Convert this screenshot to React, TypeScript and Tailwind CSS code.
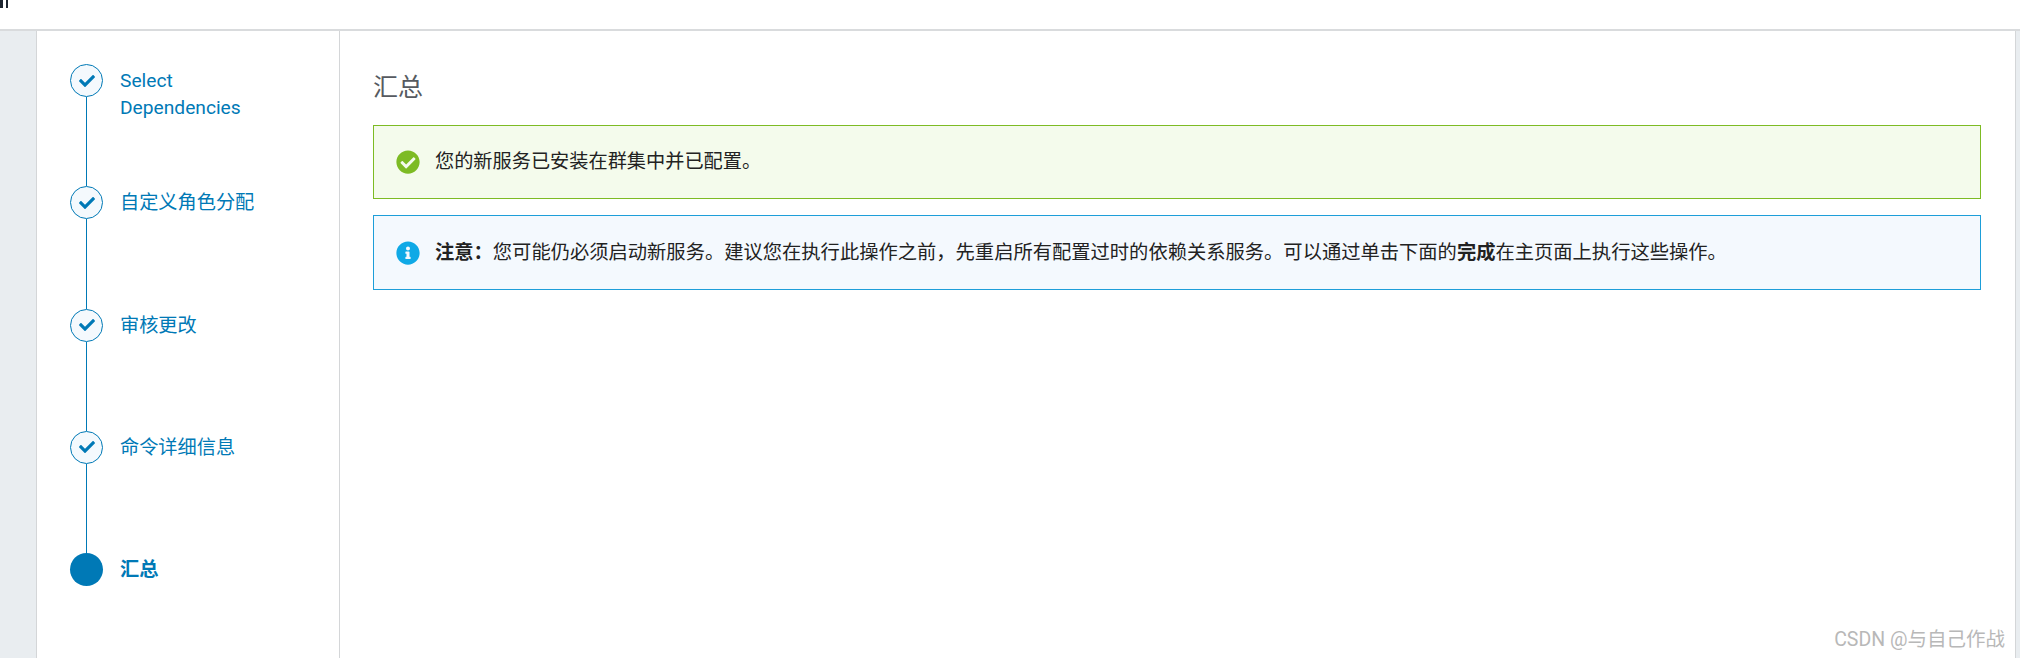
import { FaCheck, FaCheckCircle, FaInfoCircle } from 'react-icons/fa';

const fontStack = 'font-["Roboto","Noto_Sans_CJK_SC",sans-serif]';

interface Step {
  label: string;
  done: boolean;
}

const steps: Step[] = [
  { label: 'Select Dependencies', done: true },
  { label: '自定义角色分配', done: true },
  { label: '审核更改', done: true },
  { label: '命令详细信息', done: true },
  { label: '汇总', done: false },
];

const StepRow = ({ step, last }: { step: Step; last: boolean }) => (
  <li className="flex h-[122.25px] gap-[17px]">
    <div className="flex w-[33px] shrink-0 flex-col items-center">
      {step.done ? (
        <span className="flex h-[33px] w-[33px] shrink-0 items-center justify-center rounded-full border border-[#0079b6] bg-[#f4f9fd]">
          <FaCheck className="h-[16px] w-[16px] text-[#0079b6]" />
        </span>
      ) : (
        <span className="h-[33px] w-[33px] shrink-0 rounded-full bg-[#0079b6]" />
      )}
      {!last && <span className="w-[1px] flex-1 bg-[#0079b6]" />}
    </div>
    <span className={`w-[140px] pt-[3px] text-[19.2px] leading-[27px] text-[#0079b6] ${step.done ? '' : 'font-bold'}`}>
      {step.label}
    </span>
  </li>
);

export default function App() {
  return (
    <div className={`relative flex h-[658px] flex-col overflow-hidden bg-white ${fontStack}`}>
      <header className="flex h-[31px] shrink-0 items-start gap-[3px] border-b-2 border-[#d9dbdd] bg-white">
        {/* cut-off title text at the very edge of the capture */}
        <span className="h-[8px] w-[3px] bg-[#1d2530]" />
        <span className="h-[8px] w-[2px] bg-[#1d2530]" />
      </header>
      <div className="flex flex-1 bg-[#e9edf0]">
        <div className="w-[36px] shrink-0" />
        <aside className="w-[304px] shrink-0 border-x border-[#d4d6d8] bg-white pt-[33px] pl-[33px]">
          <ol>
            {steps.map((step, i) => (
              <StepRow key={step.label} step={step} last={i === steps.length - 1} />
            ))}
          </ol>
        </aside>
        <main className="flex-1 bg-white pt-[39px] pl-[33px] pr-[34px]">
          <h2 className="text-[25px] leading-[36px] text-[#565a60]">汇总</h2>
          <div className="mt-[19px] flex h-[74px] items-center gap-[15px] border border-[#7dbb24] bg-[#f4fbec] px-[22px] text-[19.2px] text-[#222]">
            <FaCheckCircle className="h-[24px] w-[24px] shrink-0 text-[#7dbb24]" />
            <span>您的新服务已安装在群集中并已配置。</span>
          </div>
          <div className="mt-[16px] flex h-[75px] items-center gap-[15px] border border-[#1d9ed9] bg-[#f4f9fe] px-[22px] text-[19.3px] text-[#222]">
            <FaInfoCircle className="h-[24px] w-[24px] shrink-0 text-[#0fa9e6]" />
            <span className="pt-[1px]">
              <b>注意：</b>您可能仍必须启动新服务。建议您在执行此操作之前，先重启所有配置过时的依赖关系服务。可以通过单击下面的<b>完成</b>在主页面上执行这些操作。
            </span>
          </div>
        </main>
        <div className="w-[5px] shrink-0 border-l border-[#d4d6d8]" />
      </div>
      <span className="absolute right-[15px] bottom-[8px] text-[19.5px] leading-[20px] text-[#b8b8b8]">CSDN @与自己作战</span>
    </div>
  );
}
